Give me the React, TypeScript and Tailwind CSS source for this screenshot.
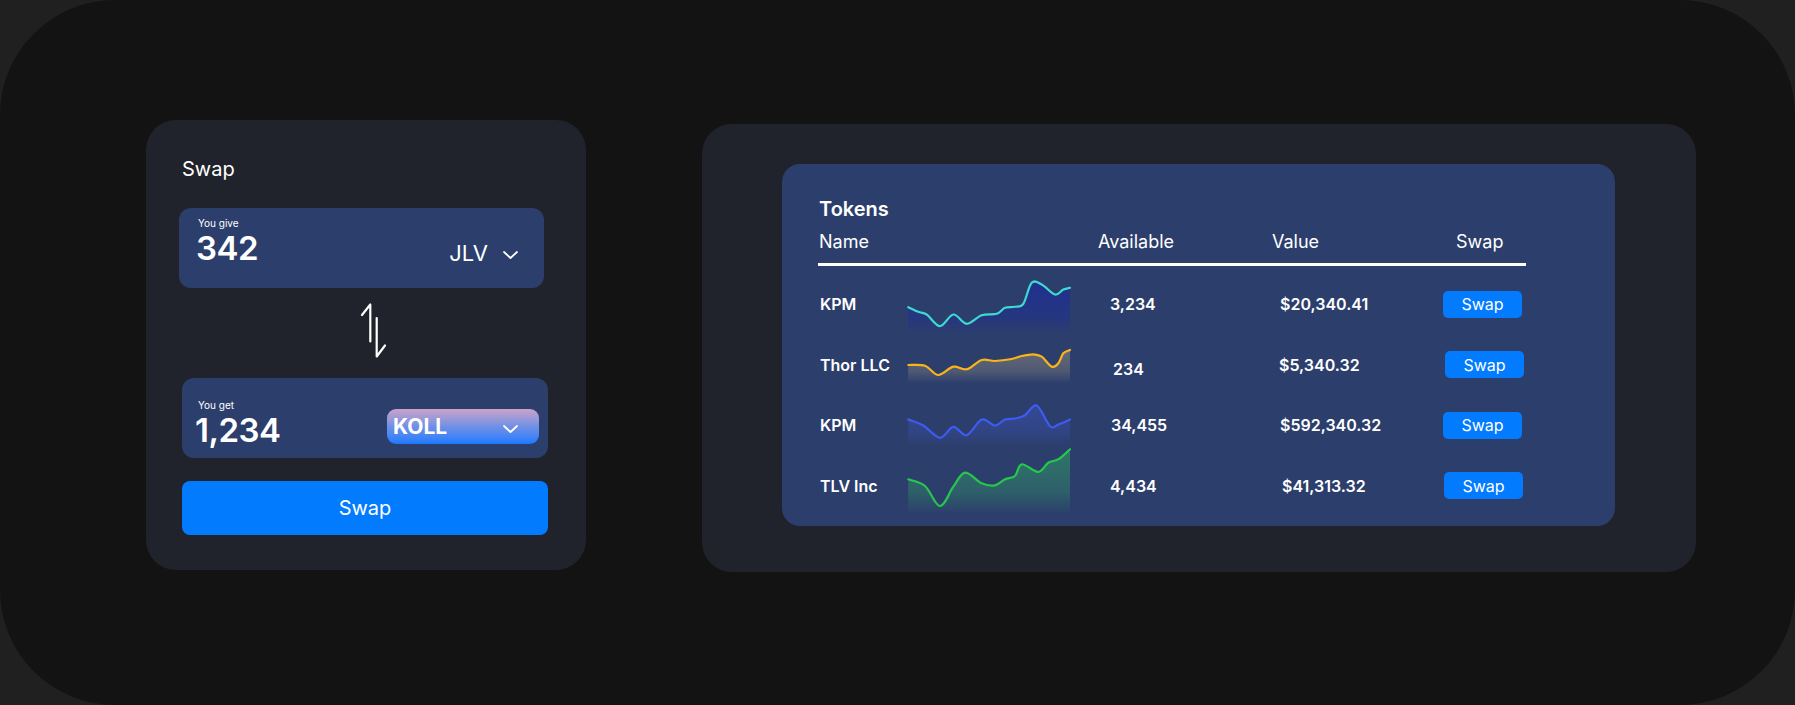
import React from "react";

type Pt = [number, number];

// catmull-rom through the points -> cubic bezier path
function smooth(pts: Pt[]) {
  let d = `M${pts[0][0]},${pts[0][1]}`;
  for (let i = 0; i < pts.length - 1; i++) {
    const p0 = pts[i - 1] || pts[i];
    const p1 = pts[i];
    const p2 = pts[i + 1];
    const p3 = pts[i + 2] || p2;
    const c1x = p1[0] + (p2[0] - p0[0]) / 6;
    const c1y = p1[1] + (p2[1] - p0[1]) / 6;
    const c2x = p2[0] - (p3[0] - p1[0]) / 6;
    const c2y = p2[1] - (p3[1] - p1[1]) / 6;
    d += ` C${c1x.toFixed(1)},${c1y.toFixed(1)} ${c2x.toFixed(1)},${c2y.toFixed(1)} ${p2[0]},${p2[1]}`;
  }
  return d;
}

interface Token {
  name: string;
  available: string;
  value: string;
  line: string;
  fill: string;
  fillOpacity: number;
  pts: Pt[];
  availClass: string;
  valueClass: string;
  btnClass: string;
}

const tokens: Token[] = [
  {
    name: "KPM",
    available: "3,234",
    value: "$20,340.41",
    line: "#3fd9d0",
    fill: "#1f2f92",
    fillOpacity: 0.9,
    pts: [[0.3, 43.2], [10.3, 47.8], [18.7, 50.5], [32, 62.2], [45.3, 50.5], [58.7, 59.8], [73.7, 51.2], [88.7, 49.8], [97, 43.8], [107, 42.8], [115.3, 39.8], [123.7, 18.8], [133.7, 20.5], [147, 30.5], [155.3, 25.5], [162, 23.8]],
    availClass: "ml-[40px]",
    valueClass: "",
    btnClass: "",
  },
  {
    name: "Thor LLC",
    available: "234",
    value: "$5,340.32",
    line: "#fbb416",
    fill: "#7a797c",
    fillOpacity: 0.75,
    pts: [[0.3, 40], [17, 40.7], [30.3, 50], [45.3, 41.7], [58.7, 44.3], [73.7, 35], [87, 36], [103.7, 34], [113.7, 31], [125.3, 29.3], [133.7, 31.7], [143.7, 41.7], [150.3, 38.3], [155.3, 28.3], [162, 25]],
    availClass: "ml-[43px] mt-[8px]",
    valueClass: "-ml-[4px]",
    btnClass: "ml-[3px]",
  },
  {
    name: "KPM",
    available: "34,455",
    value: "$592,340.32",
    line: "#3d5cf3",
    fill: "#3d56c8",
    fillOpacity: 0.45,
    pts: [[0.3, 34.5], [15.3, 40.5], [32, 52.8], [45.3, 41.8], [58.7, 50.2], [73.7, 34.5], [87, 40.5], [97, 34.5], [107, 33.5], [117, 30.2], [128.7, 20.5], [142, 41.2], [150.3, 39.5], [162, 34.5]],
    availClass: "ml-[41px]",
    valueClass: "-ml-[1px]",
    btnClass: "",
  },
  {
    name: "TLV Inc",
    available: "4,434",
    value: "$41,313.32",
    line: "#25c84c",
    fill: "#2f9566",
    fillOpacity: 0.65,
    pts: [[0.3, 33.3], [17, 40], [32, 60], [45.3, 40.7], [57, 26.7], [73.7, 37.3], [87, 39.3], [97, 33.3], [107, 30], [113.7, 18.3], [130.3, 26], [140.3, 16.7], [150.3, 13.3], [162, 3.3]],
    availClass: "ml-[40px]",
    valueClass: "ml-[2px]",
    btnClass: "-ml-[1px]",
  },
];

function Chevron({ className = "" }: { className?: string }) {
  return (
    <svg width="15" height="8" viewBox="0 0 15 8" fill="none" className={className}>
      <path d="M1 1L7.5 7L14 1" stroke="white" strokeWidth="1.8" strokeLinecap="round" strokeLinejoin="round" />
    </svg>
  );
}

function Sparkline({ t, id }: { t: Token; id: number }) {
  const d = smooth(t.pts);
  const ys = t.pts.map((p) => p[1]);
  const top = Math.min(...ys);
  const bottom = Math.max(...ys) + 8;
  return (
    <svg width="162" height="80" viewBox="0 0 162 80" className="shrink-0 overflow-visible">
      <defs>
        <linearGradient id={`spark-${id}`} x1="0" y1={top} x2="0" y2={bottom} gradientUnits="userSpaceOnUse">
          <stop offset="0" stopColor={t.fill} stopOpacity={t.fillOpacity} />
          <stop offset="0.65" stopColor={t.fill} stopOpacity={t.fillOpacity * 0.6} />
          <stop offset="1" stopColor={t.fill} stopOpacity="0" />
        </linearGradient>
      </defs>
      <path d={`${d} L162,${bottom} L0,${bottom} Z`} fill={`url(#spark-${id})`} />
      <path d={d} fill="none" stroke={t.line} strokeWidth="2.2" strokeLinecap="round" />
    </svg>
  );
}

function SwapCard() {
  return (
    <div className="w-[440px] h-[450px] shrink-0 rounded-[30px] bg-[#20232b] pl-[33px] pt-[39px] text-white">
      <h2 className="ml-[3px] text-[20px] leading-none">Swap</h2>

      <div className="mt-[29px] w-[365px] h-[80px] rounded-[12px] bg-[#2c3e6c] flex justify-between pl-[19px] pr-[26px] pt-[10px]">
        <div>
          <p className="text-[10px] leading-none">You give</p>
          <p className="mt-[4px] -ml-[2px] text-[33px] leading-none font-semibold tracking-[-0.5px]">342</p>
        </div>
        <div className="mt-[24px] flex items-center gap-[15px] h-[22px]">
          <span className="text-[22px] leading-none">JLV</span>
          <Chevron className="mt-[3px]" />
        </div>
      </div>

      <svg width="27" height="55" viewBox="0 0 27 55" fill="none" className="mt-[15px] ml-[181px]">
        <path d="M2 12L10.3 1.5V38.5" stroke="white" strokeWidth="2.2" strokeLinecap="round" strokeLinejoin="round" />
        <path d="M16.7 15V53.5L25 42.5" stroke="white" strokeWidth="2.2" strokeLinecap="round" strokeLinejoin="round" />
      </svg>

      <div className="mt-[20px] ml-[3px] w-[366px] h-[80px] rounded-[12px] bg-[#2c3e6c] flex justify-between pl-[16px] pr-[9px] pt-[22px]">
        <div>
          <p className="text-[10px] leading-none">You get</p>
          <p className="mt-[4px] -ml-[3px] text-[33px] leading-none font-semibold tracking-[-0.5px]">1,234</p>
        </div>
        <button className="mt-[9px] w-[152px] h-[35px] rounded-[9px] bg-linear-to-b from-[#caa2c8] via-[#6f90e6] to-[#1479ff] flex items-center justify-between pl-[6px] pr-[21px]">
          <span className="text-[21px] leading-none font-bold">KOLL</span>
          <Chevron className="mt-[4px]" />
        </button>
      </div>

      <button className="mt-[23px] ml-[3px] w-[366px] h-[54px] rounded-[8px] bg-[#027bff] text-[20px] leading-none flex items-center justify-center">
        Swap
      </button>
    </div>
  );
}

function TokensCard() {
  return (
    <div className="mt-[4px] w-[994px] h-[448px] shrink-0 rounded-[30px] bg-[#20232b] pl-[80px] pt-[40px]">
      <div className="w-[833px] h-[362px] rounded-[18px] bg-[#2c3e6c] pl-[36px] pt-[35px] text-white">
        <h2 className="ml-[1px] text-[20px] leading-none font-semibold">Tokens</h2>

        <div className="mt-[14px] flex text-[18px] leading-none">
          <span className="ml-[1px] w-[279px]">Name</span>
          <span className="w-[174px]">Available</span>
          <span className="w-[184px]">Value</span>
          <span>Swap</span>
        </div>
        <div className="mt-[12px] w-[708px] h-[3px] bg-white" />

        <div className="mt-[8px]">
          {tokens.map((t, i) => (
            <div key={i} className="h-[60.5px] flex items-center text-[16px] leading-none font-semibold">
              <span className="ml-[2px] w-[88px]">{t.name}</span>
              <Sparkline t={t} id={i} />
              <span className={`w-[170px] ${t.availClass}`}>{t.available}</span>
              <span className={`w-[163px] ${t.valueClass}`}>{t.value}</span>
              <button className={`w-[79px] h-[27px] rounded-[5px] bg-[#027bff] text-[16px] font-normal leading-none flex items-center justify-center ${t.btnClass}`}>
                Swap
              </button>
            </div>
          ))}
        </div>
      </div>
    </div>
  );
}

export default function App() {
  return (
    <div className="w-[1795px] h-[705px] bg-[#202020] font-['Inter',sans-serif]">
      <div className="w-full h-full rounded-[115px] bg-[#141314] flex items-start pl-[146px] pt-[120px] gap-[116px]">
        <SwapCard />
        <TokensCard />
      </div>
    </div>
  );
}
